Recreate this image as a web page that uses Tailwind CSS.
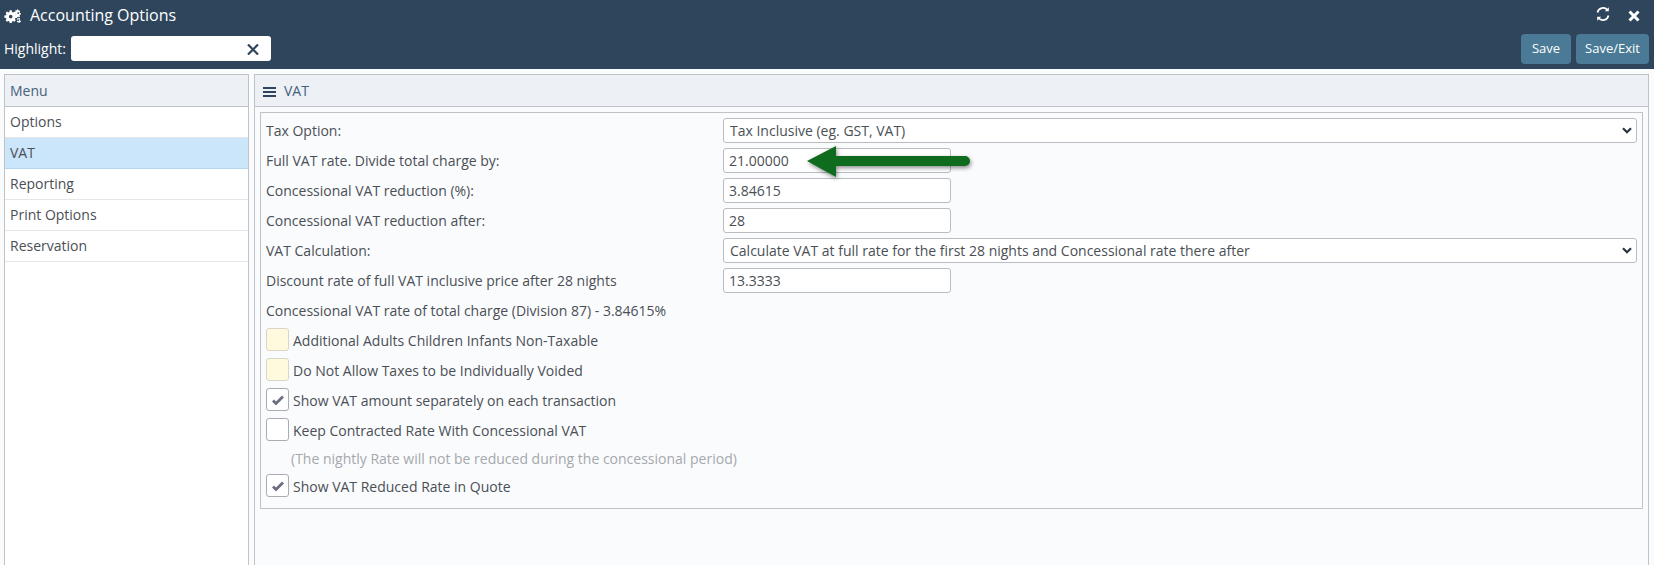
<!DOCTYPE html>
<html lang="en">
<head>
<meta charset="UTF-8">
<title>Accounting Options</title>
<script src="https://cdn.jsdelivr.net/npm/@tailwindcss/browser@4"></script>
</head>
<body class="h-[565px] overflow-hidden bg-[#fafbfd] text-[14px] text-[#4a4f55] font-['Open_Sans',sans-serif]">
  <!-- title bar -->
  <header class="h-[69px] bg-[#2e455c] text-white">
    <div class="flex h-[32px] items-center pl-[4px] pr-[14px]">
      <svg class="w-[17px] h-[14px] -mt-[1px]" viewBox="0 0 18 14" fill="#fff">
        <path d="M6 1h2.200l.3 1.700 1.100.5 1.400-.9 1.500 1.500-.9 1.400.5 1.100 1.700.3v2.200l-1.700.3-.5 1.100.9 1.400-1.500 1.500-1.400-.9-1.100.5-.3 1.700H6l-.3-1.700-1.100-.5-1.400.9-1.500-1.500.9-1.400-.5-1.100L.4 8.800V6.600l1.700-.3.5-1.100-.9-1.400 1.500-1.500 1.400.9 1.100-.5zM7.100 5.800a1.900 1.900 0 1 0 0 3.800 1.900 1.900 0 0 0 0-3.800z"/>
        <path d="M15 .3l.5 1 1-.1.6 1-.6.8.5 1 1 .2-.1 1.200-1 .2-.4 1 .5.8-.9.8-.9-.5-1 .3-.4 1h-1l-.4-1-.5-.2.4-1.700-.9-1.300-.1-1.300.9-1.200-.4-1.200.7-.3.5.3.8-.5.4-1zM15 2.900a1 1 0 1 0 0 2 1 1 0 0 0 0-2z"/>
        <path d="M15 8.300l.5 1 1-.1.6 1-.6.8.5.9 1 .2v1.100l-1 .2-.5.7-1 .1-.5-.7-1 0-.5-.8.5-.7-.4-1 .5-1.500 1-.1.4-1zM15 10.500a.9.9 0 1 0 0 1.800.9.9 0 0 0 0-1.800z"/>
      </svg>
      <span class="ml-[9px] -mt-[2px] text-[16px]">Accounting Options</span>
      <svg class="ml-auto w-[16px] h-[16px] -mt-[4px]" viewBox="0 0 16 16" fill="none" stroke="#fff" stroke-width="1.700">
        <path d="M2.500 6.500A5.700 5.700 0 0 1 12.500 4"/>
        <path d="M13.500 9.500A5.700 5.700 0 0 1 3.500 12"/>
        <path d="M13.800 1.200v4h-4z" fill="#fff" stroke="none"/>
        <path d="M2.200 14.800v-4h4z" fill="#fff" stroke="none"/>
      </svg>
      <svg class="ml-[17px] w-[12px] h-[12px]" viewBox="0 0 12 12" stroke="#fff" stroke-width="3"><path d="M1.500 1.500l9 9M10.500 1.500l-9 9"/></svg>
    </div>
    <div class="flex items-start pl-[4px] pr-[5px]">
      <span class="mt-[7px] text-[14px] leading-[19px]">Highlight:</span>
      <div class="ml-[5px] mt-[4px] flex h-[25px] w-[200px] rounded-[3px] bg-white">
        <svg class="ml-[176px] mt-[8px] w-[12px] h-[11px]" viewBox="0 0 12 11" stroke="#2e455c" stroke-width="2.200"><path d="M1 .5l10 10M11 .5l-10 10"/></svg>
      </div>
      <button class="ml-auto mt-[2px] h-[30px] w-[50px] rounded-[4px] bg-[#4a7a96] text-[13px] text-white">Save</button>
      <button class="ml-[5px] mt-[2px] h-[30px] w-[73px] rounded-[4px] bg-[#4a7a96] text-[13px] text-white">Save/Exit</button>
    </div>
  </header>

  <div class="flex gap-[5px] pl-[4px] pr-[5px] pt-[5px]">
    <!-- menu -->
    <aside class="h-[500px] w-[245px] border border-[#bfc3c8] bg-white">
      <div class="flex h-[32px] items-center border-b border-[#bfc3c8] bg-[#edf0f5] pl-[5px] text-[#45627a]">Menu</div>
      <div class="flex h-[31px] items-center border-b border-[#e4e6e9] pb-[2px] pl-[5px]">Options</div>
      <div class="flex h-[31px] items-center border-b border-[#b5d6f0] bg-[#cbe5fb] pb-[2px] pl-[5px]">VAT</div>
      <div class="flex h-[31px] items-center border-b border-[#e4e6e9] pb-[2px] pl-[5px]">Reporting</div>
      <div class="flex h-[31px] items-center border-b border-[#e4e6e9] pb-[2px] pl-[5px]">Print Options</div>
      <div class="flex h-[31px] items-center border-b border-[#e4e6e9] pb-[2px] pl-[5px]">Reservation</div>
    </aside>

    <!-- VAT panel -->
    <main class="h-[500px] flex-1 border border-[#bfc3c8]">
      <div class="flex h-[32px] items-center border-b border-[#bfc3c8] bg-[#edf0f5] pl-[8px] text-[#45627a]">
        <svg class="w-[13px] h-[12px] mt-[2px]" viewBox="0 0 13 12" fill="#2e455c"><path d="M0 1h13v2H0zM0 5h13v2H0zM0 9h13v2H0z"/></svg>
        <span class="ml-[8px]">VAT</span>
      </div>
      <div class="relative mx-[5px] mt-[5px] h-[397px] border border-[#bfc3c8] pl-[5px] pr-[5px] pt-[5px]">
        <div class="flex h-[30px] items-start">
          <label class="w-[457px] mt-[2px]">Tax Option:</label>
          <div class="flex h-[25px] flex-1 items-center justify-between rounded-[3px] border border-[#b9bdc2] bg-white pl-[6px] pr-[4px]">
            <span>Tax Inclusive (eg. GST, VAT)</span>
            <svg class="w-[10px] h-[7px]" viewBox="0 0 10 7" fill="none" stroke="#2a3440" stroke-width="2.200"><path d="M1 1.200l4 4 4-4"/></svg>
          </div>
        </div>
        <div class="flex h-[30px] items-start">
          <label class="w-[457px] mt-[2px]">Full VAT rate. Divide total charge by:</label>
          <div class="h-[25px] w-[228px] rounded-[3px] border border-[#b9bdc2] bg-white pl-[5px] leading-[23px]">21.00000</div>
        </div>
        <div class="flex h-[30px] items-start">
          <label class="w-[457px] mt-[2px]">Concessional VAT reduction (%):</label>
          <div class="h-[25px] w-[228px] rounded-[3px] border border-[#b9bdc2] bg-white pl-[5px] leading-[23px]">3.84615</div>
        </div>
        <div class="flex h-[30px] items-start">
          <label class="w-[457px] mt-[2px]">Concessional VAT reduction after:</label>
          <div class="h-[25px] w-[228px] rounded-[3px] border border-[#b9bdc2] bg-white pl-[5px] leading-[23px]">28</div>
        </div>
        <div class="flex h-[30px] items-start">
          <label class="w-[457px] mt-[2px]">VAT Calculation:</label>
          <div class="flex h-[25px] flex-1 items-center justify-between rounded-[3px] border border-[#b9bdc2] bg-white pl-[6px] pr-[4px]">
            <span>Calculate VAT at full rate for the first 28 nights and Concessional rate there after</span>
            <svg class="w-[10px] h-[7px]" viewBox="0 0 10 7" fill="none" stroke="#2a3440" stroke-width="2.200"><path d="M1 1.200l4 4 4-4"/></svg>
          </div>
        </div>
        <div class="flex h-[30px] items-start">
          <label class="w-[457px] mt-[2px]">Discount rate of full VAT inclusive price after 28 nights</label>
          <div class="h-[25px] w-[228px] rounded-[3px] border border-[#b9bdc2] bg-white pl-[5px] leading-[23px]">13.3333</div>
        </div>
        <p class="h-[30px] pt-[2px]">Concessional VAT rate of total charge (Division 87) - 3.84615%</p>

        <div class="flex h-[30px] items-start gap-[4px]">
          <span class="size-[23px] rounded-[3px] border border-[#d9d6c8] bg-[#fff9dd]"></span>
          <span class="mt-[2px]">Additional Adults Children Infants Non-Taxable</span>
        </div>
        <div class="flex h-[30px] items-start gap-[4px]">
          <span class="size-[23px] rounded-[3px] border border-[#d9d6c8] bg-[#fff9dd]"></span>
          <span class="mt-[2px]">Do Not Allow Taxes to be Individually Voided</span>
        </div>
        <div class="flex h-[30px] items-start gap-[4px]">
          <span class="flex size-[23px] items-center justify-center rounded-[3px] border border-[#a9adb3] bg-white">
            <svg class="w-[12px] h-[10px]" viewBox="0 0 12 10" fill="none" stroke="#6c6f80" stroke-width="2.800"><path d="M1 5.500l3 3 7-7"/></svg>
          </span>
          <span class="mt-[2px]">Show VAT amount separately on each transaction</span>
        </div>
        <div class="flex h-[30px] items-start gap-[4px]">
          <span class="size-[23px] rounded-[3px] border border-[#a9adb3] bg-white"></span>
          <span class="mt-[2px]">Keep Contracted Rate With Concessional VAT</span>
        </div>
        <p class="h-[26px] pl-[25px] text-[#a5a8ac]">(The nightly Rate will not be reduced during the concessional period)</p>
        <div class="flex h-[30px] items-start gap-[4px]">
          <span class="flex size-[23px] items-center justify-center rounded-[3px] border border-[#a9adb3] bg-white">
            <svg class="w-[12px] h-[10px]" viewBox="0 0 12 10" fill="none" stroke="#6c6f80" stroke-width="2.800"><path d="M1 5.500l3 3 7-7"/></svg>
          </span>
          <span class="mt-[2px]">Show VAT Reduced Rate in Quote</span>
        </div>

        <!-- callout arrow on top of the field -->
        <svg class="absolute left-[544px] top-[31px] w-[168px] h-[38px] drop-shadow-[1px_2px_2px_rgba(0,0,0,0.45)]" viewBox="0 0 168 38" fill="#0f6b1e">
          <path d="M2 17 31 2v10h129a5 5 0 0 1 0 10H31v11z"/>
        </svg>
      </div>
    </main>
  </div>
</body>
</html>
